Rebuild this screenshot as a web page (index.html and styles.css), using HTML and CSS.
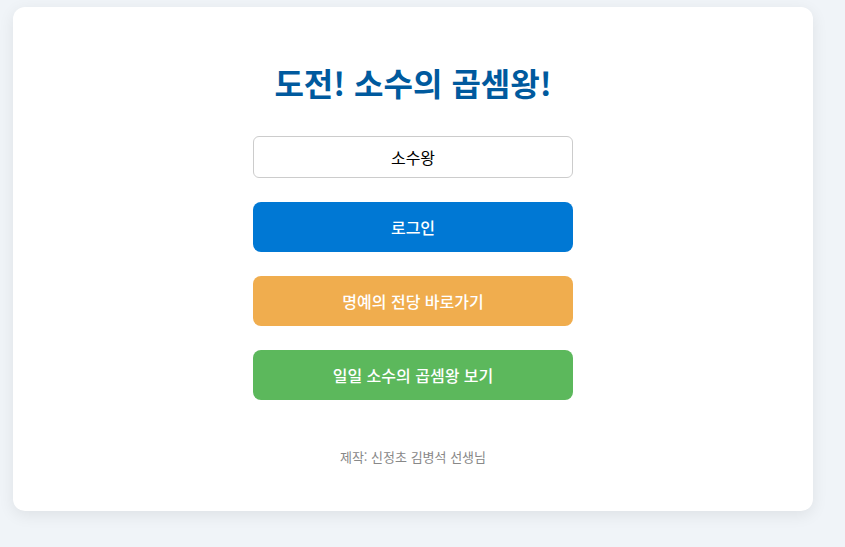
FILE: index.html
```html
<!DOCTYPE html>
<html lang="ko">
<head>
<meta charset="utf-8">
<title>도전! 소수의 곱셈왕!</title>
<link rel="stylesheet" href="styles.css">
</head>
<body>
<main class="card">
  <h1 class="title">도전! 소수의 곱셈왕!</h1>
  <div class="form">
    <input class="name-input" type="text" value="소수왕">
    <button class="btn btn-blue">로그인</button>
    <button class="btn btn-orange">명예의 전당 바로가기</button>
    <button class="btn btn-green">일일 소수의 곱셈왕 보기</button>
  </div>
  <p class="credit">제작: 신정초 김병석 선생님</p>
</main>
</body>
</html>
```
FILE: styles.css
```css
html, body {
  margin: 0;
  padding: 0;
}
body {
  background: #f0f4f8;
  font-family: "Noto Sans CJK KR", "Noto Sans", sans-serif;
  padding: 7px 13px;
  min-height: 547px;
  box-sizing: border-box;
}
.card {
  width: 800px;
  box-sizing: border-box;
  background: #fff;
  border-radius: 12px;
  box-shadow: 0 4px 16px rgba(0, 0, 0, 0.08);
  padding: 52px 0 44px;
  display: flex;
  flex-direction: column;
  align-items: center;
}
.title {
  margin: 0;
  font-size: 32px;
  font-weight: 700;
  color: #005a9e;
  line-height: 46px;
}
.form {
  width: 320px;
  display: flex;
  flex-direction: column;
  gap: 24px;
  margin-top: 31px;
}
.name-input {
  height: 42px;
  box-sizing: border-box;
  border: 1px solid #ccc;
  border-radius: 6px;
  font-family: inherit;
  font-size: 16px;
  text-align: center;
  color: #000;
  padding: 0 10px;
  outline: none;
}
.btn {
  height: 50px;
  border: none;
  border-radius: 8px;
  font-family: inherit;
  font-size: 16px;
  font-weight: 500;
  color: #fff;
  cursor: pointer;
}
.btn-blue { background: #0078d4; }
.btn-orange { background: #f0ad4e; }
.btn-green { background: #5cb85c; }
.credit {
  margin: 47px 0 0;
  font-size: 13px;
  color: #888;
  line-height: 20px;
}
```
